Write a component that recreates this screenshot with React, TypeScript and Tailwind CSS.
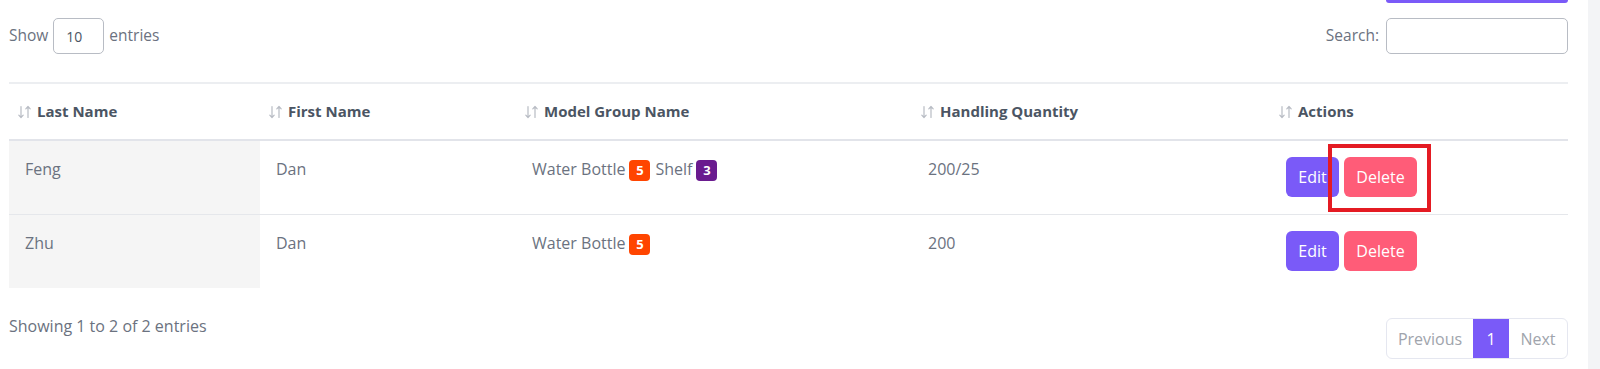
import React from 'react';

const FONT = { fontFamily: '"Open Sans", "Noto Sans", Arial, sans-serif' };

interface Row {
  last: string;
  first: string;
  groups: { name: string; count: number; color: string }[];
  qty: string;
  marked?: boolean;
}

const rows: Row[] = [
  {
    last: 'Feng',
    first: 'Dan',
    groups: [
      { name: 'Water Bottle', count: 5, color: 'bg-[#ff4500]' },
      { name: 'Shelf', count: 3, color: 'bg-[#6a1b8f]' },
    ],
    qty: '200/25',
    marked: true,
  },
  {
    last: 'Zhu',
    first: 'Dan',
    groups: [{ name: 'Water Bottle', count: 5, color: 'bg-[#ff4500]' }],
    qty: '200',
  },
];

function SortIcon() {
  return (
    <svg width="16" height="16" viewBox="0 0 16 16" className="shrink-0" fill="none" stroke="#b8bcc4" strokeWidth="1.2" strokeLinecap="round" strokeLinejoin="round">
      <path d="M4 2.5v11M1.8 11.2 4 13.5l2.2-2.3" />
      <path d="M11 13.5v-11M8.8 4.8 11 2.5l2.2 2.3" />
    </svg>
  );
}

function Th({ label, w }: { label: string; w: string }) {
  return (
    <th className={`${w} h-[57px] pl-[8px] text-left align-middle font-bold text-[#4b5563]`}>
      <div className="flex items-center gap-[4px] text-[15px]">
        <SortIcon />
        <span>{label}</span>
      </div>
    </th>
  );
}

export default function App() {
  return (
    <div className="flex min-h-[369px] bg-white text-[#6b7280]" style={FONT}>
      <div className="flex-1 pl-[9px] pr-[20px]">
        <div className="flex justify-end">
          <div className="h-[3px] w-[182px] rounded-b-md bg-[#7a5af8]" />
        </div>

        <div className="mt-[15px] flex items-center justify-between text-[15.5px]">
          <div className="flex items-center gap-[5px]">
            <span>Show</span>
            <div className="flex h-[36px] w-[51px] items-center rounded-[5px] border border-[#b8bcc4] pl-[12px] text-[14px] text-[#4b5563]">10</div>
            <span>entries</span>
          </div>
          <div className="flex items-center gap-[7px]">
            <span>Search:</span>
            <div className="h-[36px] w-[182px] rounded-[5px] border border-[#b8bcc4]" />
          </div>
        </div>

        <table className="mt-[28px] w-full table-fixed border-collapse text-[16px]">
          <thead>
            <tr className="border-t-2 border-b-2 border-t-[#eceef1] border-b-[#e2e4ea]">
              <Th label="Last Name" w="w-[251px]" />
              <Th label="First Name" w="w-[256px]" />
              <Th label="Model Group Name" w="w-[396px]" />
              <Th label="Handling Quantity" w="w-[358px]" />
              <Th label="Actions" w="w-[298px]" />
            </tr>
          </thead>
          <tbody>
            {rows.map((r, i) => (
              <tr key={i} className={i === 0 ? 'border-b border-[#e5e7eb]' : ''}>
                <td className="bg-[#f5f5f5] px-[16px] pt-[16px] pb-[17px] align-top leading-[24px]">{r.last}</td>
                <td className="px-[16px] pt-[16px] pb-[17px] align-top leading-[24px]">{r.first}</td>
                <td className="px-[16px] pt-[16px] pb-[17px] align-top leading-[24px]">
                  <div className="flex items-center">
                    {r.groups.map((g, j) => (
                      <React.Fragment key={j}>
                        <span className={j > 0 ? 'ml-[5px]' : ''}>{g.name}</span>
                        <span className={`ml-[4px] mt-[2px] flex h-[21px] w-[21px] items-center justify-center rounded-[4px] text-[13px] font-bold text-white ${g.color}`}>
                          {g.count}
                        </span>
                      </React.Fragment>
                    ))}
                  </div>
                </td>
                <td className="px-[16px] pt-[16px] pb-[17px] align-top leading-[24px]">{r.qty}</td>
                <td className="px-[16px] pt-[16px] pb-[17px] align-top">
                  <div className="relative flex gap-[5px]">
                    <button className="h-[40px] w-[53px] rounded-[6px] bg-[#7a5af8] text-[16px] text-white">Edit</button>
                    <button className="h-[40px] w-[73px] rounded-[6px] bg-[#ff5c78] text-[16px] text-white">Delete</button>
                    {r.marked && (
                      <div className="absolute left-[42px] top-[-13px] h-[68px] w-[103px] border-[4px] border-[#e41b23]" />
                    )}
                  </div>
                </td>
              </tr>
            ))}
          </tbody>
        </table>

        <div className="flex items-start justify-between text-[16px]">
          <div className="mt-[26px] leading-[24px]">Showing 1 to 2 of 2 entries</div>
          <div className="mt-[30px] flex h-[41px] overflow-hidden rounded-[6px] border border-[#e5e7f0] text-[16px]">
            <div className="flex w-[86px] items-center justify-center text-[#a0a4ac]">Previous</div>
            <div className="flex w-[36px] items-center justify-center bg-[#7a5af8] text-white">1</div>
            <div className="flex w-[58px] items-center justify-center text-[#a0a4ac]">Next</div>
          </div>
        </div>
      </div>
      <div className="w-[12px] shrink-0 bg-[#f3f4f6]" />
    </div>
  );
}
